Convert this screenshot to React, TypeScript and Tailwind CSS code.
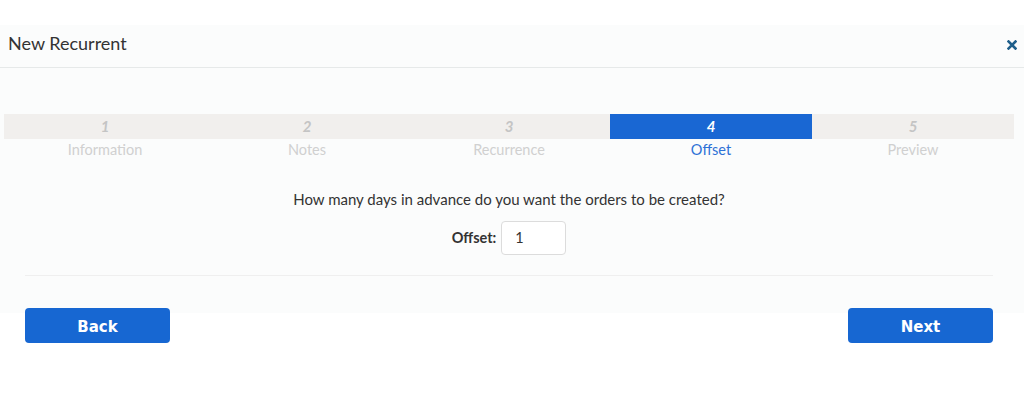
import React from 'react'

const steps = ['Information', 'Notes', 'Recurrence', 'Offset', 'Preview']
const current = 4

export default function App() {
  return (
    <div className="w-[1024px] h-[393px] bg-white pt-[25px] font-['Lato',sans-serif] text-[#333]">
      <div className="bg-[#fbfcfc]">
        {/* Header */}
        <div className="h-[43px] flex items-center justify-between pl-[8px] pr-[7px] pb-[5px] border-b border-[#e6e9e9]">
          <span className="text-[18px] text-[#333]">New Recurrent</span>
          <svg width="10" height="10" viewBox="0 0 10 10" className="mt-[3px]">
            <path d="M1.5 1.5 L8.5 8.5 M8.5 1.5 L1.5 8.5" stroke="#1f5f8b" strokeWidth="2.6" strokeLinecap="square" />
          </svg>
        </div>

        {/* Steps */}
        <div className="pt-[46px] pl-[4px] pr-[10px]">
          <div className="grid grid-cols-5">
            {steps.map((label, i) => {
              const active = i + 1 === current
              return (
                <div key={label} className="flex flex-col items-center">
                  <div
                    className={`w-full h-[25px] flex items-center justify-center italic font-bold text-[15px] ${
                      active ? 'bg-[#1967d3] text-white' : 'bg-[#f1efed] text-[#c4c4c4]'
                    }`}
                  >
                    {i + 1}
                  </div>
                  <div className={`text-[14.5px] leading-[22px] ${active ? 'text-[#2d71d6]' : 'text-[#d0d0d0]'}`}>
                    {label}
                  </div>
                </div>
              )
            })}
          </div>
        </div>

        {/* Body */}
        <div className="pl-[25px] pr-[31px]">
          <div className="pt-[29px] text-center text-[15px] leading-[18px] text-[#333]">
            How many days in advance do you want the orders to be created?
          </div>
          <div className="mt-[13px] flex items-center justify-center gap-[5px]">
            <span className="font-bold text-[14.5px] text-[#333]">Offset:</span>
            <div className="w-[65px] h-[34px] bg-white border border-[#dcdcdc] rounded-[4px] flex items-center pl-[13px] text-[14.5px] text-[#333]">
              1
            </div>
          </div>
          <div className="mt-[20px] border-t border-[#efefef]" />
        </div>
      </div>

      {/* Footer */}
      <div className="pl-[25px] pr-[31px] pt-[32px] bg-[linear-gradient(to_bottom,#fbfcfc_0,#fbfcfc_37px,#ffffff_37px)]">
        <div className="flex justify-between">
          <button className="w-[145px] h-[35px] pt-[3px] rounded-[4px] bg-[#1767d2] text-white font-bold text-[15px] font-['DejaVu_Sans',sans-serif]">
            Back
          </button>
          <button className="w-[145px] h-[35px] pt-[3px] rounded-[4px] bg-[#1767d2] text-white font-bold text-[15px] font-['DejaVu_Sans',sans-serif]">
            Next
          </button>
        </div>
      </div>
    </div>
  )
}
